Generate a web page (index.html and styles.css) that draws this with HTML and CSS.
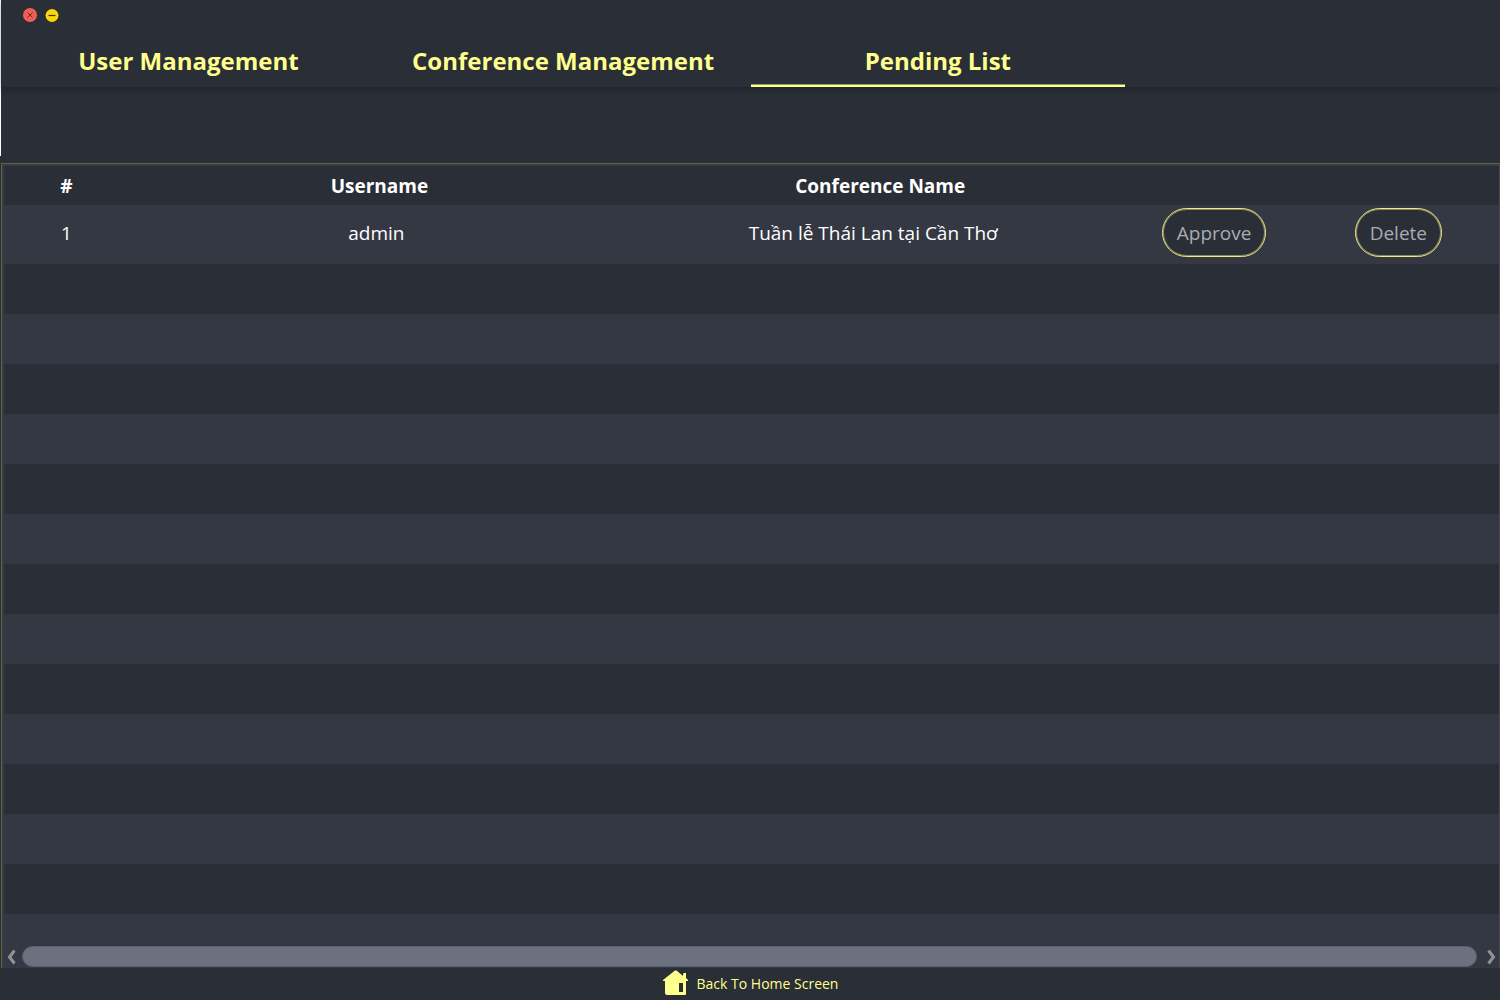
FILE: index.html
```
<!DOCTYPE html>
<html lang="en">
<head>
<meta charset="utf-8">
<title>Pending List</title>
<link rel="stylesheet" href="styles.css">
</head>
<body>
<div class="window">
  <header class="header">
    <div class="controls">
      <button class="control" type="button" aria-label="Close">
        <svg viewBox="0 0 14 14" width="14" height="14"><circle cx="7" cy="7" r="7" fill="#f25e54"/><path d="M4.500 4.500l5 5M9.500 4.500l-5 5" stroke="#692b2b" stroke-width="1"/></svg>
      </button>
      <button class="control" type="button" aria-label="Minimize">
        <svg viewBox="0 0 14 14" width="14" height="14"><circle cx="7" cy="7.500" r="6.500" fill="#fbd60a"/><path d="M3.500 7.500h7" stroke="#3a3512" stroke-width="1.200"/></svg>
      </button>
    </div>
    <nav class="tabs">
      <button class="tab" type="button">User Management</button>
      <button class="tab" type="button">Conference Management</button>
      <button class="tab tab-active" type="button">Pending List</button>
    </nav>
  </header>
  <main class="pane">
    <table class="grid">
      <colgroup><col class="col-index"><col class="col-name"><col class="col-name"><col class="col-approve"><col></colgroup>
      <thead>
        <tr><th>#</th><th>Username</th><th>Conference Name</th><th></th><th></th></tr>
      </thead>
      <tbody>
        <tr>
          <td>1</td>
          <td class="cell-text">admin</td>
          <td class="cell-title">Tuần lễ Thái Lan tại Cần Thơ</td>
          <td><button class="action" type="button">Approve</button></td>
          <td><button class="action" type="button">Delete</button></td>
        </tr>
      </tbody>
    </table>
    <div class="empty-rows"></div>
    <div class="scrollbar">
      <svg viewBox="0 0 18 22" width="18" height="22"><path d="M10.500 4.500L5.500 11l5 6.500" fill="none" stroke="#929292" stroke-width="3"/></svg>
      <div class="thumb"></div>
      <svg viewBox="0 0 22 22" width="22" height="22"><path d="M11.500 4.500l5 6.500-5 6.500" fill="none" stroke="#929292" stroke-width="3"/></svg>
    </div>
  </main>
  <footer class="footer">
    <a class="home" href="#">
      <svg viewBox="0 0 26 26" width="26" height="26"><path fill="#ffff8d" fill-rule="evenodd" d="M0 10L12 0.500h1.500L20 6V4l1-1h2v5l2 2v1h-2v13q0 1-1 1H4q-2 0-2-2V11H0zM16 13v9h4v-9z"/></svg>
      <span>Back To Home Screen</span>
    </a>
  </footer>
</div>
</body>
</html>
```
FILE: styles.css
```
* { box-sizing: border-box; }

body {
  margin: 0;
  background: linear-gradient(#ffffff 156px, #2a2e37 156px);
  color: #ffffff;
  font-family: "Open Sans", "Noto Sans", sans-serif;
}

button {
  margin: 0;
  padding: 0;
  border: 0;
  background: none;
  font-family: inherit;
}

svg { display: block; flex: none; }

.window {
  display: flex;
  flex-direction: column;
  min-height: 100vh;
  margin-left: 1px;
  background: #2a2e37;
}

.header {
  height: 87px;
  box-shadow: 0 2px 8px rgba(0, 0, 0, 0.3);
}

.controls {
  display: flex;
  gap: 8px;
  height: 36px;
  padding: 8px 22px;
}

.control { height: 14px; }

.tabs {
  display: grid;
  grid-template-columns: repeat(4, 1fr);
}

.tab {
  height: 51px;
  border-bottom: 2px solid transparent;
  color: #ffff8d;
  font-size: 24px;
  font-weight: 700;
  line-height: 48px;
}

.tab-active {
  border-color: #ffff8d;
  box-shadow: inset 0 -1px 0 #959862;
}

.pane {
  display: flex;
  flex: 1;
  flex-direction: column;
  margin-top: 76px;
  border: 1px solid #626140;
  border-right-color: #464a50;
  border-bottom: 0;
  box-shadow: inset 2px 2px 0 #383b42;
  padding: 2px 0 0 2px;
}

.grid {
  width: 100%;
  border-collapse: collapse;
  table-layout: fixed;
  text-align: center;
}

.col-index { width: 125px; }
.col-name { width: 33.5%; }
.col-approve { width: 167px; }

th {
  height: 39px;
  padding: 0;
  background: #2a2e37;
  font-size: 19px;
  font-weight: 700;
  line-height: 26px;
}

td {
  height: 59px;
  padding: 0 0 4px;
  background: #343843;
  font-size: 19px;
  line-height: 26px;
}

.cell-text { padding-right: 6px; }
.cell-title { padding-right: 14px; }

.action {
  height: 49px;
  padding: 0 14px;
  border: 1px solid #eeee86;
  border-radius: 25px;
  background: #2a2e37;
  box-shadow: inset 0 0 0 1px #85885f;
  color: #aaabaf;
  font-size: 19px;
  vertical-align: middle;
}

.empty-rows {
  flex: 1;
  background: repeating-linear-gradient(#2a2e37 0 50px, #343843 50px 100px);
}

.scrollbar {
  display: flex;
  height: 22px;
  background: #343843;
}

.thumb {
  flex: 1;
  height: 21px;
  border: 1px solid #5b606d;
  border-radius: 11px;
  background: #6c717f;
}

.footer {
  display: flex;
  justify-content: center;
  height: 32px;
}

.home {
  display: flex;
  gap: 8px;
  padding-top: 2px;
  color: #ffff8d;
  font-size: 14px;
  line-height: 28px;
  text-decoration: none;
}
```
